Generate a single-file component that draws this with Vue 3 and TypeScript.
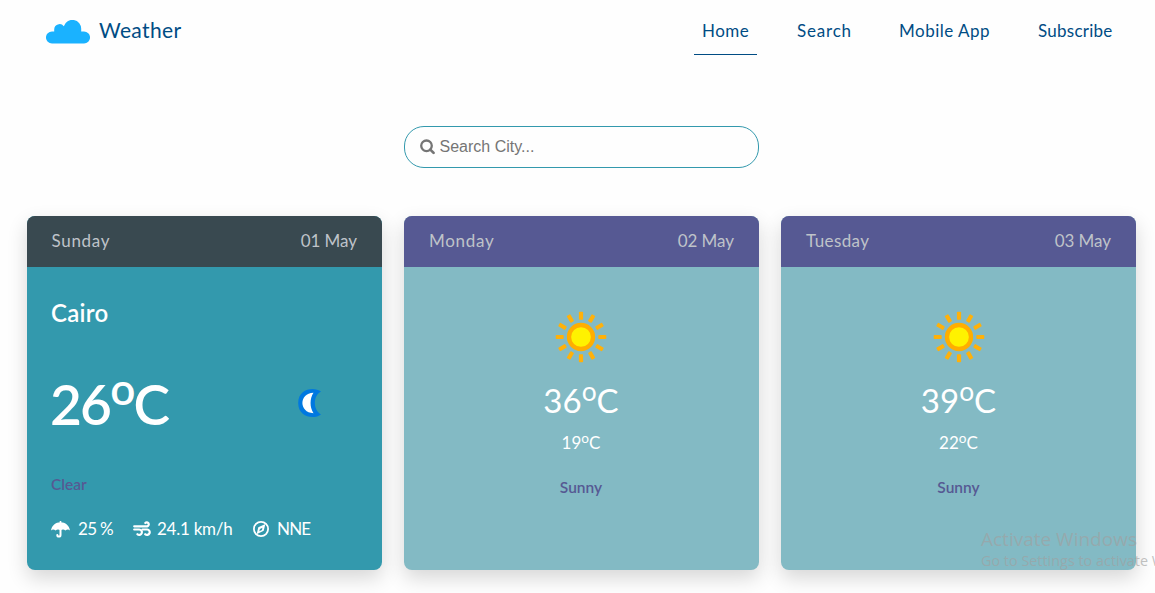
<script setup lang="ts">
interface NavItem { label: string; key: string; active?: boolean }
interface Forecast { day: string; date: string; high: number; low: number; condition: string }

const navItems: NavItem[] = [
  { label: 'Home', key: 'home', active: true },
  { label: 'Search', key: 'search' },
  { label: 'Mobile App', key: 'mobile' },
  { label: 'Subscribe', key: 'subscribe' },
]

const forecasts: Forecast[] = [
  { day: 'Monday', date: '02 May', high: 36, low: 19, condition: 'Sunny' },
  { day: 'Tuesday', date: '03 May', high: 39, low: 22, condition: 'Sunny' },
]

const rays = Array.from({ length: 12 }, (_, i) => i * 30)
</script>

<template>
  <div class="page">
    <header class="navbar">
      <a class="brand">
        <svg class="cloud" viewBox="0 0 44 24" aria-hidden="true">
          <path d="M6 23.600a6 6 0 0 1 0-12.100h2.200V9.500a5.400 5.400 0 0 1 9.600-3.300a8.900 8.900 0 0 1 17.400 3.100v2.200H38a6 6 0 0 1 0 12.100z" fill="#1ab2ff" />
        </svg>
        <span>Weather</span>
      </a>
      <nav class="links">
        <a v-for="item in navItems" :key="item.key" class="link" :class="[item.key, { active: item.active }]">{{ item.label }}</a>
      </nav>
    </header>

    <label class="search-box">
      <svg viewBox="0 0 16 16" aria-hidden="true">
        <circle cx="6.5" cy="6.8" r="5.3" fill="none" stroke="#757575" stroke-width="2.3" />
        <path d="M10.300 10.600l3.300 3.300" stroke="#757575" stroke-width="2.700" stroke-linecap="round" />
      </svg>
      <input type="text" placeholder="Search City..." />
    </label>

    <main class="cards">
      <section class="card today">
        <div class="card-head"><span class="day sunday">Sunday</span><span class="date">01 May</span></div>
        <div class="card-body">
          <h2 class="city">Cairo</h2>
          <div class="now">
            <div class="now-temp">26<sup>o</sup>C</div>
            <svg class="moon" viewBox="0 0 26 30" aria-hidden="true">
              <path d="M24 3.600C17.500-1.500 1.200.200 1.200 15s16.300 16.500 22.800 11.400C15.800 22 15.800 8 24 3.600z" fill="#0078e0" />
              <path d="M16.500 4.800C1.800 5.300 1.800 24.700 16.500 25.200C12.600 19.500 12.600 10.500 16.500 4.800z" fill="#fff" />
            </svg>
          </div>
          <p class="condition clear">Clear</p>
          <div class="stats">
            <span class="stat rain">
              <svg viewBox="0 0 19 17" aria-hidden="true">
                <path d="M9.500 0v2" stroke="#fff" stroke-width="1.600" />
                <path d="M0 9.400C.8 4.400 4.600 1.200 9.500 1.200s8.700 3.200 9.500 8.200q-2.200-1.900-4.600.2q-2.300-2.100-4.900 0q-2.600-2.100-4.900 0Q2.200 7.500 0 9.400z" fill="#fff" />
                <path d="M9.500 8v5.900a1.600 1.600 0 0 1-3.200 0" fill="none" stroke="#fff" stroke-width="2" stroke-linecap="round" />
              </svg>
              <span>25 %</span>
            </span>
            <span class="stat wind">
              <svg viewBox="0 0 18 16" aria-hidden="true">
                <g fill="none" stroke="#fff" stroke-width="2.200" stroke-linecap="round">
                  <path d="M1.200 5.300h13a2 2 0 1 0-1.900-3.300" />
                  <path d="M1.200 8.500h5a2.700 2.700 0 1 1-1.800 4.700" />
                  <path d="M9.500 8.500h4.700a2.700 2.700 0 1 1-2 4.700" />
                </g>
              </svg>
              <span>24.1 km/h</span>
            </span>
            <span class="stat compass">
              <svg viewBox="0 0 16 16" aria-hidden="true">
                <circle cx="8" cy="8" r="7.1" fill="none" stroke="#fff" stroke-width="1.800" />
                <path fill-rule="evenodd" d="M12.400 3L10.700 9.800L3.600 13.200L5.300 6.200zM9.400 6.800L6.900 8L6.300 10.200L9 8.900z" fill="#fff" />
              </svg>
              <span>NNE</span>
            </span>
          </div>
        </div>
      </section>

      <section v-for="item in forecasts" :key="item.day" class="card forecast">
        <div class="card-head"><span class="day" :class="item.day.toLowerCase()">{{ item.day }}</span><span class="date">{{ item.date }}</span></div>
        <div class="card-body">
          <svg class="sun" viewBox="-26 -26 52 52" aria-hidden="true">
            <rect v-for="angle in rays" :key="angle" x="-2.1" y="-25.300" width="4.200" height="8" rx=".8" fill="#ffb10a" :transform="`rotate(${angle})`" />
            <circle r="12" fill="#fff200" stroke="#ffae00" stroke-width="4.300" />
          </svg>
          <div class="high">{{ item.high }}<sup>o</sup>C</div>
          <div class="low">{{ item.low }}<sup>o</sup>C</div>
          <p class="condition">{{ item.condition }}</p>
        </div>
      </section>
    </main>

    <aside class="system-notice">
      <div class="notice-title">Activate Windows</div>
      <div class="notice-text">Go to Settings to activate W</div>
    </aside>
  </div>
</template>

<style>
body {
  margin: 0;
  overflow: hidden;
}
</style>

<style scoped>
.page {
  position: relative;
  box-sizing: border-box;
  width: 1155px;
  height: 593px;
  overflow: hidden;
  background: #fefefe;
  font-family: Lato, "Liberation Sans", sans-serif;
  font-size: 17px;
}
.navbar {
  display: flex;
  justify-content: space-between;
  box-sizing: border-box;
  height: 126px;
  padding: 0 35px 0 46px;
  color: #004c84;
}
.brand {
  display: flex;
  align-items: flex-start;
  gap: 9px;
  padding-top: 20px;
  font-size: 21px;
  line-height: 19px;
  letter-spacing: .35px;
}
.cloud {
  width: 44px;
  height: 24px;
}
.links {
  display: flex;
  gap: 32px;
  align-items: flex-start;
  padding-top: 8px;
}
.link {
  box-sizing: border-box;
  height: 47px;
  padding: 0 8px;
  line-height: 46px;
  white-space: nowrap;
  border-bottom: 1px solid transparent;
}
.link.active {
  border-bottom-color: #004c84;
}
.home { width: 63px; letter-spacing: .45px; }
.search { width: 70px; letter-spacing: .8px; }
.mobile { width: 107px; letter-spacing: .5px; }
.subscribe { width: 90px; letter-spacing: .25px; }
.search-box {
  display: flex;
  align-items: center;
  box-sizing: border-box;
  width: 355px;
  height: 42px;
  margin-left: 404px;
  padding: 0 15px;
  border: 1px solid #3399ad;
  border-radius: 20px;
}
.search-box svg {
  width: 16px;
  height: 16px;
  margin-right: 3.5px;
}
.search-box input {
  flex: 1;
  min-width: 0;
  padding: 0;
  border: 0;
  outline: 0;
  background: transparent;
  font: 16px "Liberation Sans", Arial, sans-serif;
}
.search-box input::placeholder {
  color: #757575;
}
.cards {
  display: grid;
  grid-template-columns: repeat(3, 355px);
  gap: 22px;
  margin: 48px 0 0 27px;
}
.card {
  height: 354px;
  border-radius: 8px;
  background: #83bac4;
  box-shadow: 0 8px 20px rgba(0, 0, 0, .16);
  color: #fff;
}
.card-head {
  display: flex;
  justify-content: space-between;
  height: 51px;
  padding: 0 25px;
  border-radius: 8px 8px 0 0;
  background: #565993;
  color: #bfc3c9;
  line-height: 50px;
}
.day { letter-spacing: .7px; }
.tuesday { letter-spacing: .4px; }
.sunday { margin-left: -.5px; }
.date { letter-spacing: -.05px; }
.today {
  background: #3399ad;
}
.today .card-head {
  background: #394950;
}
.today .card-body {
  padding: 32px 25px 0 24px;
}
.city {
  margin: 0;
  font-size: 24px;
  font-weight: 600;
  line-height: 27px;
  letter-spacing: .3px;
}
.now {
  display: flex;
  align-items: center;
  justify-content: space-between;
  height: 60px;
  margin-top: 48px;
  padding-right: 34px;
}
sup {
  position: relative;
  font-size: .8em;
  line-height: 0;
  vertical-align: .46em;
}
.now-temp {
  margin-left: -1px;
  font-size: 55px;
  font-weight: 600;
  line-height: 60px;
  letter-spacing: -1.8px;
}
.moon {
  width: 26px;
  height: 30px;
  margin-bottom: 3px;
}
.condition {
  margin: 0;
  font-size: 15.5px;
  font-weight: 600;
  line-height: 20px;
  color: #565993;
}
.clear {
  margin-top: 40px;
}
.stats {
  display: flex;
  margin-top: 25px;
  line-height: 20px;
  white-space: nowrap;
}
.stat {
  display: flex;
  align-items: center;
}
.rain { width: 82px; letter-spacing: -.7px; }
.rain svg { width: 19px; height: 17px; margin-right: 8px; }
.wind { width: 120px; letter-spacing: -.25px; }
.wind svg { width: 18px; height: 16px; margin-right: 6px; }
.compass { letter-spacing: -.8px; }
.compass svg { width: 16px; height: 16px; margin-right: 8px; }
.forecast .card-body {
  display: flex;
  flex-direction: column;
  align-items: center;
  padding-top: 44px;
}
.forecast:nth-child(2) .card-body {
  padding-right: 1px;
}
.sun {
  width: 52px;
  height: 52px;
}
.high {
  margin-top: 17px;
  font-size: 33px;
  font-weight: 400;
  line-height: 40px;
}
.low {
  margin-top: 13px;
  line-height: 20px;
}
.forecast .condition {
  margin-top: 24px;
}
.system-notice {
  position: absolute;
  left: 981px;
  top: 526px;
  color: rgba(160, 160, 160, .65);
  font-family: "Open Sans", "Noto Sans", sans-serif;
  white-space: nowrap;
}
.notice-title {
  font-size: 19px;
  line-height: 26px;
}
.notice-text {
  font-size: 14.4px;
  line-height: 18px;
}
</style>
